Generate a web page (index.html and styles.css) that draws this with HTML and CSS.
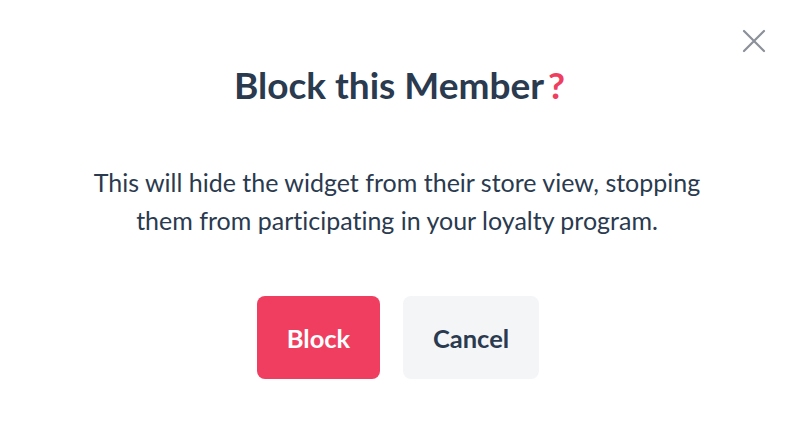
FILE: index.html
```html
<!DOCTYPE html>
<html>
<head>
<meta charset="utf-8">
<link rel="stylesheet" href="styles.css">
</head>
<body>
<div class="modal">
  <button class="close" aria-label="Close">
    <svg width="24" height="24" viewBox="0 0 24 24"><path d="M2 2L22 22M22 2L2 22" stroke="#8b9099" stroke-width="2.2" stroke-linecap="round" fill="none"/></svg>
  </button>
  <h1 class="title">Block this Member<span class="q">?</span></h1>
  <p class="text">This will hide the widget from their store view, stopping them from participating in your loyalty program.</p>
  <div class="actions">
    <button class="btn btn-primary">Block</button>
    <button class="btn btn-secondary">Cancel</button>
  </div>
</div>
</body>
</html>
```
FILE: styles.css
```css
html, body {
  margin: 0;
  padding: 0;
  background: #fff;
}
body {
  font-family: Lato, "Open Sans", sans-serif;
  color: #2a3a4f;
  font-variant-ligatures: none;
}
.modal {
  position: relative;
  width: 794px;
  height: 446px;
  box-sizing: border-box;
  padding-top: 63px;
  display: flex;
  flex-direction: column;
  align-items: center;
}
.close {
  position: absolute;
  top: 29px;
  right: 28px;
  padding: 0;
  border: 0;
  background: none;
  width: 24px;
  height: 24px;
  cursor: pointer;
}
.close svg { display: block; }
.title {
  margin: 0;
  padding-left: 5px;
  font-size: 37px;
  font-weight: 700;
  line-height: 44px;
}
.q {
  color: #ef3e5f;
  margin-left: 4px;
}
.text {
  margin: 56px 0 0;
  width: 640px;
  text-align: center;
  font-size: 25px;
  line-height: 38px;
}
.actions {
  margin-top: 57px;
  padding-left: 2px;
  display: flex;
  gap: 23px;
}
.btn {
  font-family: inherit;
  font-size: 25.5px;
  font-weight: 700;
  border: 0;
  border-radius: 8px;
  height: 83px;
  padding: 0;
  cursor: pointer;
  font-variant-ligatures: none;
}
.btn-primary {
  width: 123px;
  background: #ef3e5f;
  color: #fff;
}
.btn-secondary {
  width: 136px;
  background: #f4f5f7;
  color: #2a3a4f;
}
```
